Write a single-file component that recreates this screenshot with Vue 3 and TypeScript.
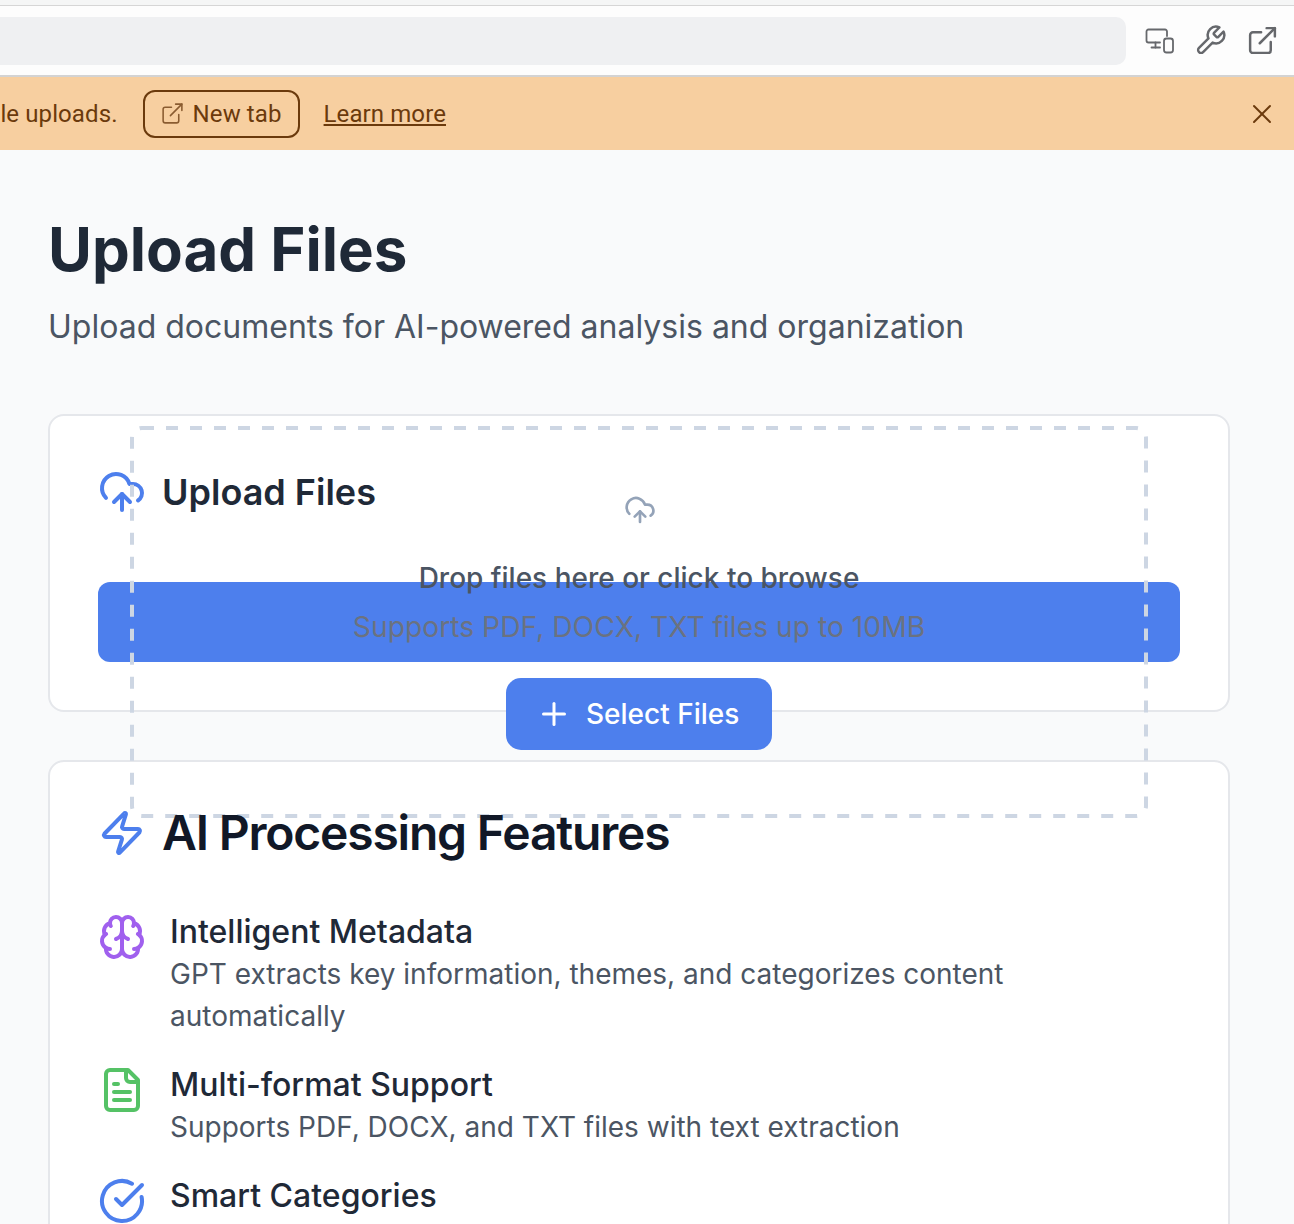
<script setup lang="ts">
interface Feature {
  title: string;
  desc: string;
  tone: string;
  paths: string[];
}

const brain = [
  "M12 5a3 3 0 1 0-5.997.125 4 4 0 0 0-2.526 5.77 4 4 0 0 0 .556 6.588A4 4 0 1 0 12 18Z",
  "M12 5a3 3 0 1 1 5.997.125 4 4 0 0 1 2.526 5.77 4 4 0 0 1-.556 6.588A4 4 0 1 1 12 18Z",
  "M15 13a4.5 4.5 0 0 1-3-4 4.5 4.5 0 0 1-3 4",
  "M17.599 6.5a3 3 0 0 0 .399-1.375",
  "M6.003 5.125A3 3 0 0 0 6.401 6.5",
  "M3.477 10.896a4 4 0 0 1 .585-.396",
  "M19.938 10.5a4 4 0 0 1 .585.396",
  "M6 18a4 4 0 0 1-1.967-.516",
  "M19.967 17.484A4 4 0 0 1 18 18",
];
const fileText = [
  "M15 2H6a2 2 0 0 0-2 2v16a2 2 0 0 0 2 2h12a2 2 0 0 0 2-2V7Z",
  "M14 2v4a2 2 0 0 0 2 2h4",
  "M10 9H8",
  "M16 13H8",
  "M16 17H8",
];
const check = ["M21.801 10A10 10 0 1 1 17 3.335", "m9 11 3 3L22 4"];
const cloudUpload = [
  "M12 13v8",
  "M4 14.899A7 7 0 1 1 15.71 8h1.79a4.5 4.5 0 0 1 2.5 8.242",
  "m8 17 4-4 4 4",
];
const externalLink = [
  "M15 3h6v6",
  "M10 14 21 3",
  "M18 13v6a2 2 0 0 1-2 2H5a2 2 0 0 1-2-2V8a2 2 0 0 1 2-2h6",
];

const features: Feature[] = [
  {
    title: "Intelligent Metadata",
    desc: "GPT extracts key information, themes, and categorizes content automatically",
    tone: "purple",
    paths: brain,
  },
  {
    title: "Multi-format Support",
    desc: "Supports PDF, DOCX, and TXT files with text extraction",
    tone: "green",
    paths: fileText,
  },
  {
    title: "Smart Categories",
    desc: "Automatically sorts documents into relevant categories",
    tone: "blue",
    paths: check,
  },
];
</script>

<template>
  <div class="page">
    <div class="top-strip" />
    <header class="toolbar">
      <div class="address" />
      <div class="tools">
        <svg class="tool" viewBox="0 0 33 33">
          <path d="M25 12V7.5A2 2 0 0 0 23 5.500H6.500A2 2 0 0 0 4.500 7.500V16.500A2 2 0 0 0 6.500 18.500H18" />
          <path d="M13.500 18.500V23.500" />
          <path d="M9.500 23.500H18" />
          <rect x="22" y="14.500" width="9" height="14" rx="2.500" />
        </svg>
        <svg class="tool" viewBox="0 0 24 24">
          <path d="M14.700 6.300a1 1 0 0 0 0 1.400l1.600 1.600a1 1 0 0 0 1.400 0l3.770-3.770a6 6 0 0 1-7.940 7.940l-6.910 6.910a2.120 2.120 0 0 1-3-3l6.910-6.910a6 6 0 0 1 7.940-7.940l-3.760 3.760z" />
        </svg>
        <svg class="tool" viewBox="0 0 24 24">
          <path v-for="d in externalLink" :key="d" :d="d" />
        </svg>
      </div>
    </header>

    <div class="banner">
      <div class="banner-body">
        <span class="banner-text">Open this app in a new tab to enable file uploads.</span>
        <a class="new-tab">
          <svg class="new-tab-icon" viewBox="0 0 24 24">
            <path v-for="d in externalLink" :key="d" :d="d" />
          </svg>
          New tab
        </a>
        <a class="learn">Learn more</a>
      </div>
      <svg class="close" viewBox="0 0 24 24">
        <path d="M4 4 20 20" />
        <path d="M20 4 4 20" />
      </svg>
    </div>

    <main class="content">
      <h1 class="title">Upload Files</h1>
      <p class="subtitle">Upload documents for AI-powered analysis and organization</p>

      <section class="card upload-card">
        <div class="card-head">
          <svg class="icon blue" viewBox="0 0 24 24">
            <path v-for="d in cloudUpload" :key="d" :d="d" />
          </svg>
          <h2 class="upload-title">Upload Files</h2>
        </div>
        <div class="blue-bar" />

        <div class="dropzone">
          <svg class="dash" viewBox="0 0 1018 392">
            <rect x="2" y="2" width="1014" height="388" rx="10" />
          </svg>
          <svg class="drop-icon" viewBox="0 0 24 24">
            <path v-for="d in cloudUpload" :key="d" :d="d" />
          </svg>
          <p class="drop-text">Drop files here or click to browse</p>
          <p class="drop-sub">Supports PDF, DOCX, TXT files up to 10MB</p>
          <button class="select-btn" type="button">
            <svg class="plus" viewBox="0 0 24 24">
              <path d="M5 12h14" />
              <path d="M12 5v14" />
            </svg>
            Select Files
          </button>
        </div>
      </section>

      <section class="card features-card">
        <div class="features-head">
          <svg class="icon blue" viewBox="0 0 24 24">
            <path d="M4 14a1 1 0 0 1-.78-1.630l9.900-10.200a.5.5 0 0 1 .860.460l-1.920 6.020A1 1 0 0 0 13 10h7a1 1 0 0 1 .780 1.630l-9.900 10.200a.5.5 0 0 1-.860-.460l1.920-6.020A1 1 0 0 0 11 14z" />
          </svg>
          <h2 class="features-title">AI Processing Features</h2>
        </div>
        <ul class="features">
          <li v-for="f in features" :key="f.title" class="feature">
            <svg class="icon feature-icon" :class="f.tone" viewBox="0 0 24 24">
              <path v-for="d in f.paths" :key="d" :d="d" />
            </svg>
            <div class="feature-copy">
              <h3 class="feature-title">{{ f.title }}</h3>
              <p class="feature-desc">{{ f.desc }}</p>
            </div>
          </li>
        </ul>
      </section>
    </main>
  </div>
</template>

<style>
html,
body {
  margin: 0;
  overflow: hidden;
}
</style>

<style scoped>
.page {
  height: 1224px;
  overflow: hidden;
  background: #f9fafb;
  font-family: Inter, "Liberation Sans", sans-serif;
}

svg {
  fill: none;
  stroke: currentColor;
  stroke-width: 2;
  stroke-linecap: round;
  stroke-linejoin: round;
  flex: none;
}

.top-strip {
  height: 5px;
  background: #f5f6f6;
  border-bottom: 1px solid #d6d6d6;
}

.toolbar {
  display: flex;
  align-items: center;
  height: 69px;
  background: #fdfdfd;
  border-bottom: 2px solid #d3d3d3;
  box-sizing: content-box;
}

.address {
  flex: 1;
  height: 48px;
  background: #eff0f2;
  border-radius: 0 10px 10px 0;
}

.tools {
  display: flex;
  align-items: center;
  gap: 19px;
  padding: 0 15px 0 16px;
  color: #66686c;
}

.tool {
  width: 33px;
  height: 33px;
  stroke-width: 1.800;
}

.banner {
  display: flex;
  align-items: center;
  justify-content: flex-end;
  height: 73px;
  overflow: hidden;
  background: #f7cfa0;
  color: #6b3a0c;
  font-family: Roboto, "Liberation Sans", sans-serif;
  font-size: 24px;
  letter-spacing: 0.100px;
}

.banner-body {
  display: flex;
  align-items: center;
  flex: none;
  white-space: nowrap;
}

.banner-text {
  margin-right: 25px;
}

.new-tab {
  display: flex;
  align-items: center;
  gap: 8px;
  box-sizing: border-box;
  height: 48px;
  width: 157px;
  padding-left: 15px;
  border: 2px solid #6b3a0c;
  border-radius: 12px;
}

.new-tab-icon {
  width: 25px;
  height: 25px;
  stroke-width: 1.500;
  color: #8a5c30;
}

.learn {
  margin-left: 24px;
  text-decoration: underline;
}

.close {
  width: 24px;
  height: 24px;
  margin: 0 20px 0 804px;
  stroke-width: 2;
}

.content {
  padding: 59px 64px 0 48px;
}

.title {
  margin: 0;
  font-size: 60px;
  line-height: 80px;
  font-weight: 700;
  color: #1f2937;
}

.subtitle {
  margin: 14px 0 0;
  font-size: 32px;
  line-height: 48px;
  color: #4b5563;
}

.card {
  background: #fff;
  border: 2px solid #e5e7eb;
  border-radius: 16px;
  padding: 48px;
  position: relative;
}

.upload-card {
  margin-top: 63px;
  padding-top: 49px;
  height: 298px;
  box-sizing: border-box;
}

.card-head {
  display: flex;
  align-items: center;
  gap: 16px;
  height: 54px;
}

.icon {
  width: 48px;
  height: 48px;
}

.blue {
  color: #4d7fed;
}

.purple {
  color: #a060ee;
}

.green {
  color: #55c266;
}

.upload-title {
  margin: 0;
  font-size: 36px;
  line-height: 54px;
  font-weight: 600;
  color: #1f2937;
}

.blue-bar {
  height: 80px;
  margin-top: 63px;
  border-radius: 12px;
  background: #4d7fed;
}

.dropzone {
  position: absolute;
  left: 80px;
  top: 10px;
  z-index: 1;
  width: 1018px;
  height: 392px;
  display: flex;
  flex-direction: column;
  align-items: center;
  padding-top: 68px;
  box-sizing: border-box;
}

.dash {
  position: absolute;
  inset: 0;
  width: 1018px;
  height: 392px;
  color: #cdd6e3;
  stroke-width: 4;
  stroke-dasharray: 12 12;
  stroke-linecap: butt;
}

.drop-icon {
  width: 32px;
  height: 32px;
  margin-left: 2px;
  color: #94a3b8;
  position: relative;
}

.drop-text {
  margin: 31px 0 0;
  font-size: 28px;
  line-height: 42px;
  font-weight: 500;
  color: #4b5563;
  position: relative;
}

.drop-sub {
  margin: 7px 0 0;
  font-size: 28.250px;
  line-height: 42px;
  color: #6b7280;
  position: relative;
}

.select-btn {
  display: flex;
  align-items: center;
  gap: 14px;
  box-sizing: border-box;
  height: 72px;
  width: 266px;
  margin-top: 30px;
  padding: 0 0 0 30px;
  border: 0;
  border-radius: 15px;
  background: #4d7fed;
  color: #fff;
  font-family: inherit;
  font-size: 28px;
  font-weight: 500;
  position: relative;
}

.plus {
  width: 36px;
  height: 36px;
}

.features-card {
  margin-top: 48px;
  padding-top: 44px;
}

.features-head {
  display: flex;
  align-items: center;
  gap: 16px;
  height: 54px;
  position: relative;
  z-index: 2;
}

.features-title {
  margin: 0;
  font-size: 48px;
  line-height: 54px;
  font-weight: 600;
  color: #111827;
  letter-spacing: -1.200px;
}

.features {
  list-style: none;
  margin: 49px 0 0;
  padding: 0;
  display: flex;
  flex-direction: column;
  gap: 24.500px;
}

.feature {
  display: flex;
  gap: 24px;
}

.feature-icon {
  margin-top: 4px;
}

.feature-copy {
  flex: 1;
}

.feature-title {
  margin: 0;
  font-size: 32px;
  line-height: 45px;
  font-weight: 500;
  color: #1f2937;
}

.feature-desc {
  margin: 0;
  padding-right: 130px;
  font-size: 28px;
  line-height: 41.500px;
  color: #4b5563;
}
</style>
